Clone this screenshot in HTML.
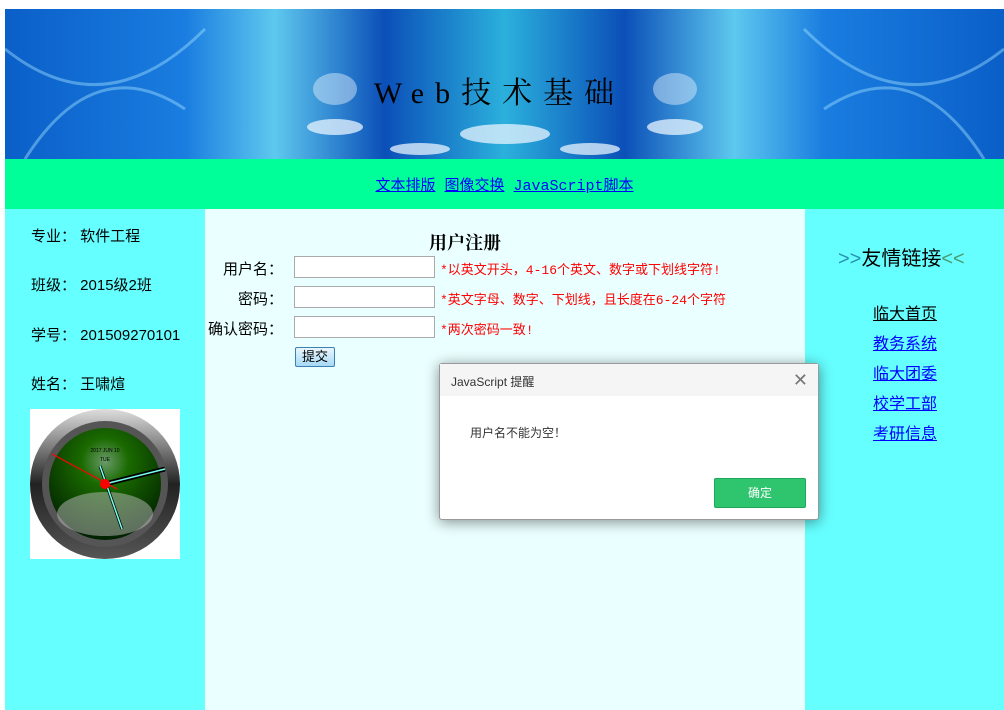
<!DOCTYPE html>
<html><head><meta charset="utf-8"><style>
*{margin:0;padding:0;box-sizing:border-box}
body{width:1004px;height:710px;background:#fff;position:relative;overflow:hidden;font-family:"Liberation Sans","Noto Sans CJK SC",sans-serif}
.abs{position:absolute}
#hdr{left:5px;top:9px;width:999px;height:150px;overflow:hidden;background:linear-gradient(90deg,#0a5fc8 0%,#1a7de0 18%,#5ec8ee 27%,#0b4fb8 38%,#2bb0dc 50%,#0b4fb8 62%,#5ec8ee 73%,#1a7de0 82%,#0a5fc8 100%)}
#title{left:0;width:999px;text-align:center;font-family:"Liberation Serif","Noto Serif CJK SC",serif;font-size:30px;letter-spacing:11px;color:#000}
#nav{left:5px;top:159px;width:999px;height:50px;background:#00ff99;text-align:center;font-family:"Liberation Mono","Noto Sans CJK SC",monospace;font-size:15px;padding-top:15px}
a{color:#00f}
#left{left:5px;top:209px;width:200px;height:501px;background:#66ffff}
#mid{left:205px;top:209px;width:600px;height:501px;background:#eaffff}
#right{left:805px;top:209px;width:199px;height:501px;background:#66ffff}
.li{left:31px;font-size:15px;color:#000}
.lbl{font-size:15px;text-align:right;width:90px;left:193px}
.inp{left:294px;width:141px;height:22px;border:1px solid #a9a9a9;background:#fff}
.tip{left:440px;font-size:13px;color:#f00;font-family:"Liberation Mono","Noto Sans CJK SC",monospace}
.rl{left:873px;font-size:16px}
</style></head><body>
<div id="hdr" class="abs">
<svg width="999" height="150" style="position:absolute;left:0;top:0">
<g fill="none" stroke="#9fe0ff" stroke-opacity=".45" stroke-width="3">
<path d="M0 40 Q100 120 200 20"/><path d="M20 150 Q90 40 180 100"/><path d="M999 40 Q899 120 799 20"/><path d="M979 150 Q909 40 819 100"/>
</g>
<g fill="#e8f4ff" opacity=".75">
<ellipse cx="330" cy="118" rx="28" ry="8"/><ellipse cx="500" cy="125" rx="45" ry="10"/><ellipse cx="670" cy="118" rx="28" ry="8"/>
<ellipse cx="415" cy="140" rx="30" ry="6"/><ellipse cx="585" cy="140" rx="30" ry="6"/>
<ellipse cx="330" cy="80" rx="22" ry="16" opacity=".6"/><ellipse cx="670" cy="80" rx="22" ry="16" opacity=".6"/>
</g>
</svg>
</div>
<div id="title" class="abs" style="top:68px">Web技术基础</div>
<div id="nav" class="abs"><a href="#">文本排版</a> <a href="#">图像交换</a> <a href="#">JavaScript脚本</a></div>
<div id="left" class="abs"></div><div id="mid" class="abs"></div><div id="right" class="abs"></div>
<div class="abs li" style="top:225px">专业：&nbsp;软件工程</div>
<div class="abs li" style="top:274px">班级：&nbsp;2015级2班</div>
<div class="abs li" style="top:324px">学号：&nbsp;201509270101</div>
<div class="abs li" style="top:373px">姓名：&nbsp;王啸煊</div>
<svg class="abs" style="left:30px;top:409px" width="150" height="150">
<rect width="150" height="150" fill="#fff"/>
<defs><radialGradient id="g" cx=".5" cy=".3" r=".7"><stop offset="0" stop-color="#6a9a6a"/><stop offset=".3" stop-color="#1a6a00"/><stop offset="1" stop-color="#002000"/></radialGradient>
<linearGradient id="r" x1="0" y1="0" x2="0" y2="1"><stop offset="0" stop-color="#ddd"/><stop offset=".5" stop-color="#222"/><stop offset="1" stop-color="#555"/></linearGradient></defs>
<circle cx="75" cy="75" r="75" fill="url(#r)"/>
<circle cx="75" cy="75" r="63" fill="#555"/>
<circle cx="75" cy="75" r="56" fill="url(#g)"/>
<ellipse cx="75" cy="105" rx="48" ry="22" fill="#bbb" opacity=".5"/>
<line x1="75" y1="75" x2="135" y2="60" stroke="#000" stroke-width="5"/>
<line x1="75" y1="75" x2="135" y2="60" stroke="#7fe" stroke-width="1.5"/>
<line x1="70" y1="57" x2="92" y2="120" stroke="#000" stroke-width="3"/>
<line x1="70" y1="57" x2="92" y2="120" stroke="#7fe" stroke-width="1.5"/>
<line x1="22" y1="45" x2="87" y2="80" stroke="#f00" stroke-width="1.2"/>
<circle cx="75" cy="75" r="5" fill="#f00"/>
<text x="75" y="43" font-size="5" text-anchor="middle" fill="#000">2017 JUN 10</text>
<text x="75" y="52" font-size="5" text-anchor="middle" fill="#000">TUE</text>
</svg>
<div class="abs" style="left:205px;top:229px;width:520px;text-align:center;font-size:18px;font-weight:bold;font-family:'Liberation Serif','Noto Serif CJK SC',serif">用户注册</div>
<div class="abs lbl" style="top:258px">用户名：</div>
<div class="abs lbl" style="top:288px">密码：</div>
<div class="abs lbl" style="top:318px">确认密码：</div>
<div class="abs inp" style="top:256px"></div>
<div class="abs inp" style="top:286px"></div>
<div class="abs inp" style="top:316px"></div>
<div class="abs tip" style="top:259px">*以英文开头，4-16个英文、数字或下划线字符!</div>
<div class="abs tip" style="top:289px">*英文字母、数字、下划线，且长度在6-24个字符</div>
<div class="abs tip" style="top:319px">*两次密码一致!</div>
<div class="abs" style="left:295px;top:347px;width:40px;height:20px;border:1px solid #3c7fb1;border-radius:2px;background:linear-gradient(#eaf6fd,#a7d9f5);font-size:13px;text-align:center;line-height:18px">提交</div>
<div class="abs" style="left:838px;top:242px;font-size:20px;color:#000"><span style="color:#2a8fb0">&gt;&gt;</span>友情链接<span style="color:#4a9a70">&lt;&lt;</span></div>
<a class="abs rl" href="#" style="top:300px;color:#000">临大首页</a>
<a class="abs rl" href="#" style="top:330px">教务系统</a>
<a class="abs rl" href="#" style="top:360px">临大团委</a>
<a class="abs rl" href="#" style="top:390px">校学工部</a>
<a class="abs rl" href="#" style="top:420px">考研信息</a>
<div class="abs" style="left:439px;top:363px;width:380px;height:157px;background:#fff;border:1px solid #999;border-radius:3px;box-shadow:0 2px 14px rgba(0,0,0,.45);font-family:'Liberation Sans','Noto Sans CJK SC',sans-serif">
<div style="height:32px;background:#f5f5f5;font-size:12px;color:#333;padding:9px 11px">JavaScript 提醒</div>
<div style="position:absolute;right:10px;top:7px;font-size:18px;color:#777;line-height:18px">✕</div>
<div style="position:absolute;left:30px;top:60px;font-size:12px;color:#333">用户名不能为空！</div>
<div style="position:absolute;left:274px;top:114px;width:92px;height:30px;background:#2ec56e;border:1px solid #1fa85a;border-radius:2px;color:#fff;font-size:12px;text-align:center;line-height:28px">确定</div>
</div>
</body></html>
